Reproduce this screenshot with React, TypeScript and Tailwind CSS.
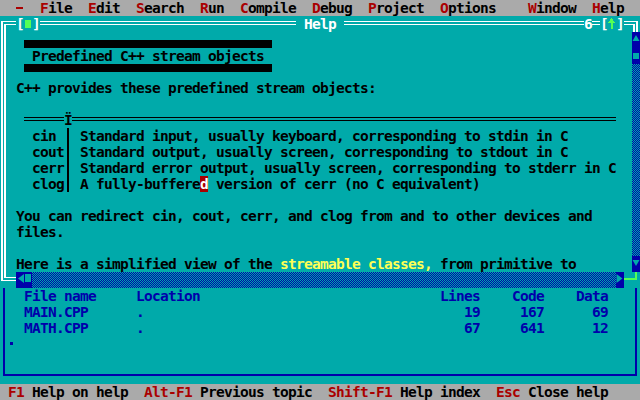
import React from 'react'

// Borland C++ IDE – Help window over the project window, 80x25 text mode (8x16 cells)

const menu = [
  { key: 'F', rest: 'ile' },
  { key: 'E', rest: 'dit' },
  { key: 'S', rest: 'earch' },
  { key: 'R', rest: 'un' },
  { key: 'C', rest: 'ompile' },
  { key: 'D', rest: 'ebug' },
  { key: 'P', rest: 'roject' },
  { key: 'O', rest: 'ptions' },
  { key: 'W', rest: 'indow', wide: true },
  { key: 'H', rest: 'elp' },
]

const status = [
  { k: 'F1', label: 'Help on help' },
  { k: 'Alt-F1', label: 'Previous topic' },
  { k: 'Shift-F1', label: 'Help index' },
  { k: 'Esc', label: 'Close help' },
]

const files = [
  { name: 'MAIN.CPP', loc: '.', lines: '19', code: '167', data: '69' },
  { name: 'MATH.CPP', loc: '.', lines: '67', code: '641', data: '12' },
]

const dither =
  'bg-[image:repeating-conic-gradient(#0000aa_0%_25%,#00aaaa_0%_50%)] bg-[length:2px_2px]'

// rects [x, y, w, h] inside one 8x16 cell
const corners: Record<string, number[][]> = {
  tl: [[1, 5, 2, 11], [1, 5, 7, 1], [4, 8, 2, 8], [4, 8, 4, 1]],
  tr: [[0, 5, 6, 1], [4, 5, 2, 11], [0, 8, 3, 1], [1, 8, 2, 8]],
  bl: [[1, 0, 2, 9], [1, 8, 7, 1], [4, 0, 2, 6], [4, 5, 4, 1]],
}

function Corner({ kind }: { kind: 'tl' | 'tr' | 'bl' }) {
  return (
    <svg width="8" height="16" className="shrink-0" shapeRendering="crispEdges">
      {corners[kind].map(([x, y, w, h], i) => (
        <rect key={i} x={x} y={y} width={w} height={h} fill="#ffffff" />
      ))}
    </svg>
  )
}

function HLine({ w, color = 'border-white' }: { w: string; color?: string }) {
  return <div className={`${w} shrink-0 mt-[5px] h-[4px] border-y ${color}`} />
}

function MenuBar() {
  return (
    <div className="h-[16px] bg-[#aaaaaa] flex gap-[16px] pl-[16px] whitespace-pre">
      <div className="w-[8px] shrink-0">
        <div className="mt-[7px] w-[7px] h-[2px] bg-[#aa0000]" />
      </div>
      {menu.map((m) => (
        <span key={m.key} className={m.wide ? 'ml-[16px]' : ''}>
          <span className="text-[#aa0000]">{m.key}</span>
          {m.rest}
        </span>
      ))}
    </div>
  )
}

function TitleRow() {
  return (
    <div className="h-[16px] flex text-white whitespace-pre">
      <Corner kind="tl" />
      <HLine w="w-[8px]" />
      <span>[</span>
      <div className="w-[8px] shrink-0">
        <div className="ml-[1px] mt-[4px] w-[6px] h-[8px] bg-[#55ff55]" />
      </div>
      <span>]</span>
      <HLine w="w-[256px]" />
      <span> Help </span>
      <HLine w="w-[240px]" />
      <span>6</span>
      <HLine w="w-[8px]" />
      <span>[</span>
      <svg width="8" height="16" className="shrink-0" shapeRendering="crispEdges">
        <polygon points="3.5,2 7,7 0,7" fill="#55ff55" />
        <rect x="2.5" y="6" width="2" height="7" fill="#55ff55" />
      </svg>
      <span>]</span>
      <HLine w="w-[8px]" />
      <Corner kind="tr" />
    </div>
  )
}

function VScroll() {
  return (
    <div className="w-[8px] shrink-0 flex flex-col">
      <div className="h-[16px] bg-[#0000aa]">
        <svg width="8" height="16">
          <polygon points="4,3 7.5,9 0.5,9" fill="#00aaaa" />
        </svg>
      </div>
      <div className="h-[16px] bg-[#0000aa]">
        <div className="ml-[1px] mt-[5px] w-[6px] h-[6px] bg-[#00aaaa]" />
      </div>
      <div className={`flex-1 ${dither}`} />
      <div className="h-[16px] bg-[#0000aa]">
        <svg width="8" height="16">
          <polygon points="0.5,4 7.5,4 4,10" fill="#00aaaa" />
        </svg>
      </div>
    </div>
  )
}

function HelpBody() {
  const streams = [
    { name: 'cin', text: 'Standard input, usually keyboard, corresponding to stdin in C' },
    { name: 'cout', text: 'Standard output, usually screen, corresponding to stdout in C' },
    { name: 'cerr', text: 'Standard error output, usually screen, corresponding to stderr in C' },
    {
      name: 'clog',
      text: (
        <>
          A fully-buffere
          <span className="inline-block h-[16px] bg-[#aa0000] text-white">d</span>
          {' version of cerr (no C equivalent)'}
        </>
      ),
    },
  ]

  return (
    <div className="w-[624px] shrink-0 whitespace-pre">
      {/* topic title */}
      <div className="h-[48px] pt-[8px] pl-[16px]">
        <div className="w-[248px] h-[32px] border-y-8 border-black pl-[8px]">
          Predefined C++ stream objects
        </div>
      </div>
      <p className="h-[16px] pl-[8px]">C++ provides these predefined stream objects:</p>
      <div className="h-[16px]" />

      {/* table */}
      <div className="h-[16px] flex pl-[16px]">
        <HLine w="w-[40px]" color="border-black" />
        <span className="w-[8px] shrink-0">Ï</span>
        <HLine w="w-[544px]" color="border-black" />
      </div>
      <div className="h-[64px] flex">
        <div className="ml-[24px] w-[32px] shrink-0">
          {streams.map((s) => (
            <div key={s.name} className="h-[16px]">
              {s.name}
            </div>
          ))}
        </div>
        <div className="w-[8px] shrink-0">
          <div className="ml-[3px] w-[2px] h-full bg-black" />
        </div>
        <div className="pl-[8px]">
          {streams.map((s) => (
            <div key={s.name} className="h-[16px]">
              {s.text}
            </div>
          ))}
        </div>
      </div>
      <div className="h-[16px]" />

      <p className="h-[16px] pl-[8px]">
        You can redirect cin, cout, cerr, and clog from and to other devices and
      </p>
      <p className="h-[16px] pl-[8px]">files.</p>
      <div className="h-[16px]" />
      <p className="h-[16px] pl-[8px]">
        {'Here is a simplified view of the '}
        <span className="text-[#ffff55]">streamable classes,</span>
        {' from primitive to'}
      </p>
    </div>
  )
}

function HScrollRow() {
  return (
    <div className="h-[16px] flex">
      <Corner kind="bl" />
      <HLine w="w-[8px]" />
      <div className="w-[8px] shrink-0 bg-[#0000aa]">
        <svg width="8" height="16">
          <polygon points="2,6.5 8,2 8,11" fill="#00aaaa" />
        </svg>
      </div>
      <div className="w-[8px] shrink-0 bg-[#0000aa]">
        <div className="ml-[1px] mt-[2px] w-[6px] h-[8px] bg-[#00aaaa]" />
      </div>
      <div className={`w-[584px] shrink-0 ${dither}`} />
      <div className="w-[8px] shrink-0 bg-[#0000aa]">
        <svg width="8" height="16">
          <polygon points="0.5,2 6.5,6.5 0.5,11" fill="#00aaaa" />
        </svg>
      </div>
      <div className="w-[8px] shrink-0">
        <div className="mt-[6px] h-[2px] bg-[#55ff55]" />
      </div>
      <div className="w-[8px] shrink-0">
        <div className="w-[5px] h-[8px] border-r-2 border-b-2 border-[#55ff55]" />
      </div>
    </div>
  )
}

function HelpWindow() {
  return (
    <div className="h-[272px] flex flex-col">
      <TitleRow />
      <div className="h-[240px] flex">
        <div className="w-[8px] shrink-0">
          <div className="ml-[1px] w-[5px] h-full border-x-2 border-white" />
        </div>
        <HelpBody />
        <VScroll />
      </div>
      <HScrollRow />
    </div>
  )
}

function FileRow(props: { name: string; loc: string; lines: string; code: string; data: string }) {
  return (
    <div className="h-[16px] ml-[19px] grid grid-cols-[112px_304px_40px_64px_64px] whitespace-pre">
      <span>{props.name}</span>
      <span>{props.loc}</span>
      <span className="text-right">{props.lines}</span>
      <span className="text-right">{props.code}</span>
      <span className="text-right">{props.data}</span>
    </div>
  )
}

function ProjectWindow() {
  return (
    <div className="h-[96px] px-[3px]">
      <div className="h-[88px] border-x-2 border-b-2 border-[#0000aa] text-[#0000aa]">
        <FileRow name="File name" loc="Location" lines="Lines" code="Code" data="Data" />
        {files.map((f) => (
          <FileRow key={f.name} {...f} />
        ))}
        <div className="h-[16px]">
          <div className="ml-[5px] mt-[6px] w-[3px] h-[3px] bg-[#0000aa]" />
        </div>
      </div>
    </div>
  )
}

function StatusBar() {
  return (
    <div className="h-[16px] bg-[#aaaaaa] flex gap-[16px] pl-[8px] whitespace-pre">
      {status.map((s) => (
        <span key={s.k}>
          <span className="text-[#aa0000]">{s.k}</span>
          {' ' + s.label}
        </span>
      ))}
    </div>
  )
}

export default function App() {
  return (
    <div className="w-[640px] h-[400px] overflow-hidden bg-[#00aaaa] font-['DejaVu_Sans_Mono',monospace] text-[14.5px] leading-[16px] tracking-[-0.73px] font-bold text-black">
      <MenuBar />
      <HelpWindow />
      <ProjectWindow />
      <StatusBar />
    </div>
  )
}
